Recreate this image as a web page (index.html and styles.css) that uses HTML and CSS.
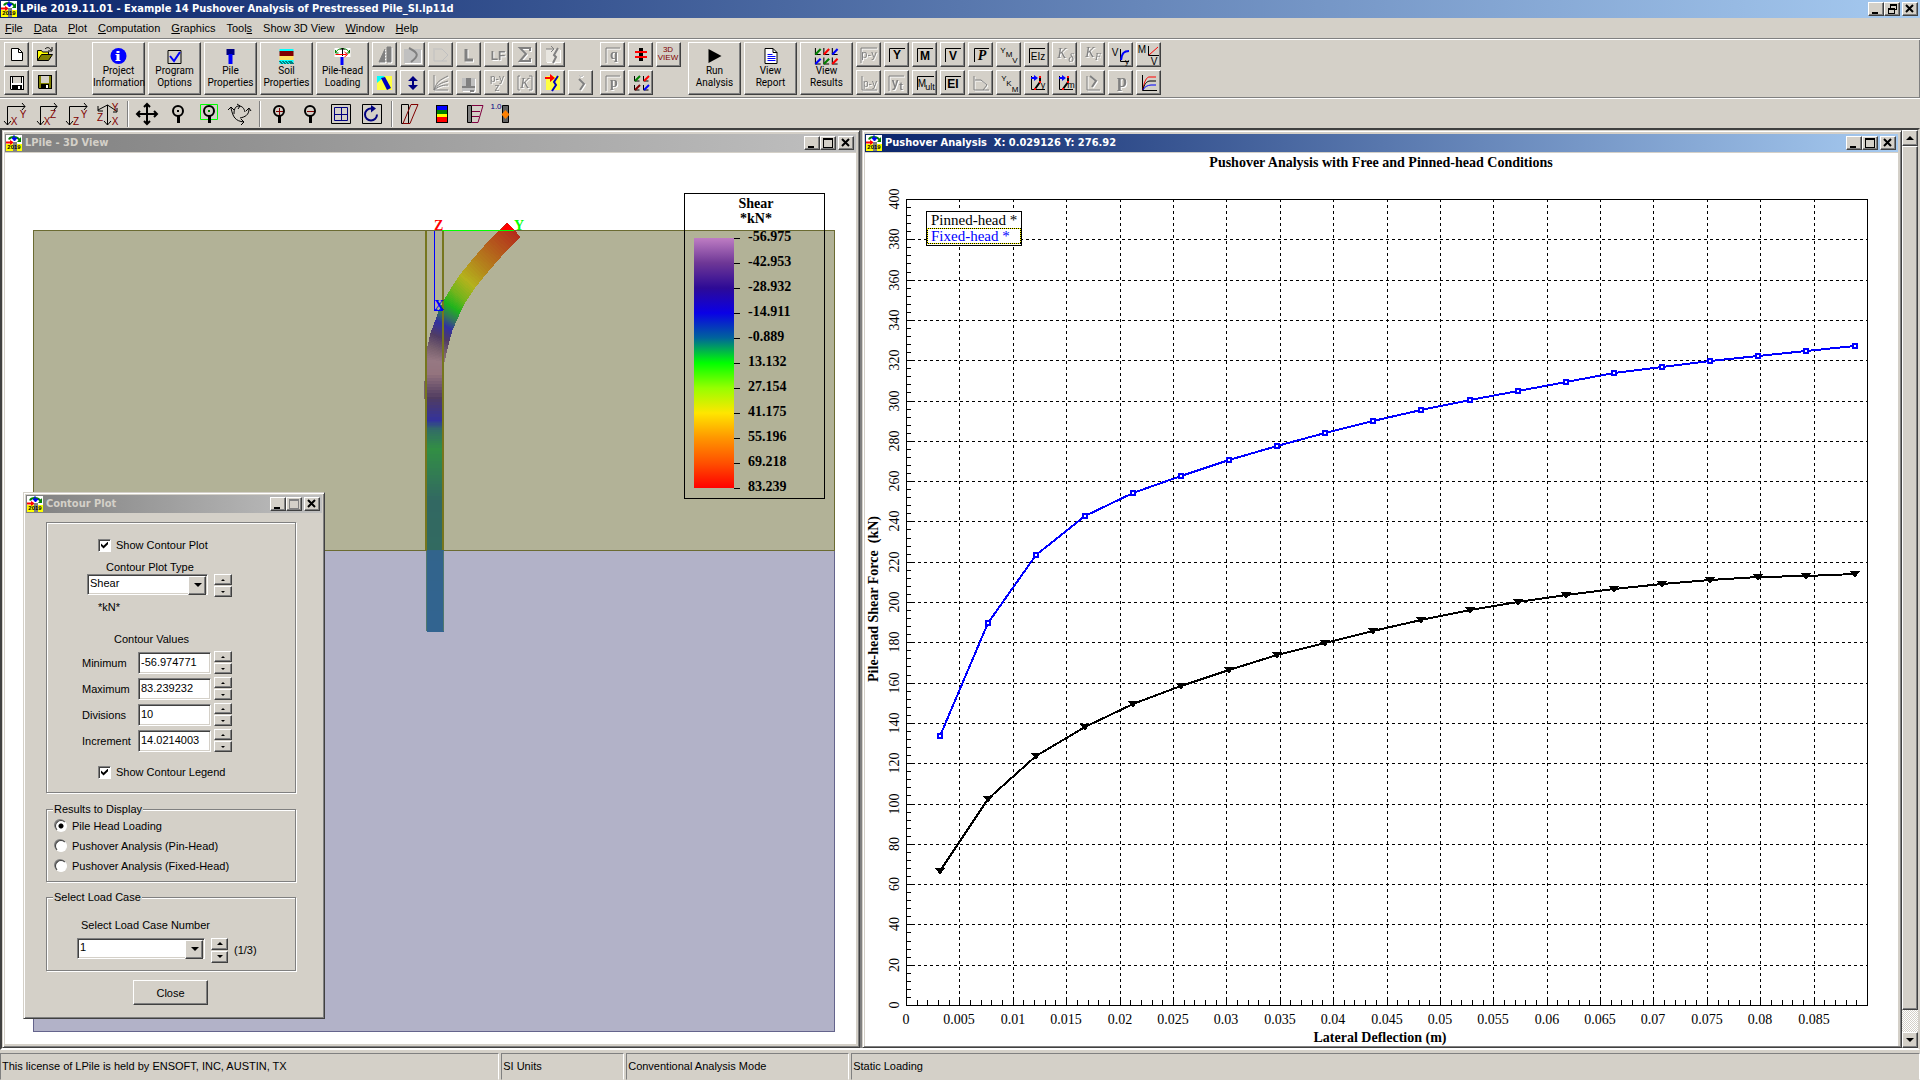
FILE: index.html
```html
<!DOCTYPE html>
<html lang="en">
<head>
    <meta charset="UTF-8">
    <meta name="viewport" content="width=device-width, initial-scale=1.0">
    <title>LPile 2019.11.01</title>
    <link rel="stylesheet" href="styles.css">
</head>
<body>
    <svg class="defs" width="0" height="0" aria-hidden="true">
        <symbol id="logo" viewBox="0 0 16 16" overflow="visible">
            <rect width="16" height="10" fill="#fff"/>
            <rect y="9" width="16" height="7" fill="#ffff00"/>
            <path d="M3 4.500c1-3 8-4 11 1" fill="none" stroke="#008000" stroke-width="2"/>
            <path d="M15 2v5h-4z" fill="#008000"/>
            <path d="M8 0v4M6 3h5l-2.500 3z" stroke="#0000ff" fill="#0000ff"/>
            <path d="M0 7.500h6" stroke="#ff0000" stroke-width="2"/>
            <path d="M4 5l4 2.500-4 2.500z" fill="#ff0000"/>
            <rect x="7" y="7" width="4" height="9" fill="#808080"/>
            <text x="8" y="14" class="logo-year">2019</text>
        </symbol>
        <symbol id="multi" viewBox="0 0 23 17">
            <path d="M1 1v6h5M9 1v6h5M17 1v6h5M1 10v6h5M9 10v6h5M17 10v6h5" fill="none" stroke="#000"/>
            <path d="M1 7l5-5M9 16l5-5" stroke="#008000" stroke-width="2"/>
            <path d="M9 7l5-5M17 16l5-5" stroke="#ff0000" stroke-width="2"/>
            <path d="M17 7l5-5M1 16l5-5" stroke="#0000ff" stroke-width="2"/>
        </symbol>
    </svg>

    <header class="titlebar active">
        <svg class="logo"><use href="#logo"/></svg>
        <h1>LPile 2019.11.01 - Example 14 Pushover Analysis of Prestressed Pile_SI.lp11d</h1>
        <div class="controls">
            <button aria-label="Minimize"><svg viewBox="0 0 14 12"><path d="M3 9h6v2H3z"/></svg></button>
            <button aria-label="Restore"><svg viewBox="0 0 14 12"><path d="M5 1h7v6h-2v4H3V5h2zM6 3v2h4v1h1V3zM4 7v3h5V7z" fill-rule="evenodd"/></svg></button>
            <button aria-label="Close"><svg viewBox="0 0 14 12"><path d="M3 2l7 7M10 2l-7 7" class="cross"/></svg></button>
        </div>
    </header>

    <nav class="menu">
        <a href="#"><u>F</u>ile</a>
        <a href="#"><u>D</u>ata</a>
        <a href="#"><u>P</u>lot</a>
        <a href="#"><u>C</u>omputation</a>
        <a href="#"><u>G</u>raphics</a>
        <a href="#">Tool<u>s</u></a>
        <a href="#">Show 3D View</a>
        <a href="#"><u>W</u>indow</a>
        <a href="#"><u>H</u>elp</a>
    </nav>

    <div class="toolbar">
        <div class="grid cols-2 files">
            <button aria-label="New"><svg viewBox="0 0 23 23"><path d="M6.500 5.500h7l4 4v8h-11z" fill="#fff" stroke="#000"/><path d="M13.500 5.500v4h4" fill="none" stroke="#000"/></svg></button>
            <button aria-label="Open"><svg viewBox="0 0 23 23"><path d="M4.500 17.500v-10h4l1 1.500h6v3" fill="#ffff00" stroke="#000"/><path d="M4.500 17.500l4-6h11l-4 6z" fill="#808000" stroke="#000"/><path d="M12 6c2-2 4-2 6 1M19 4v4h-4" fill="none" stroke="#000"/></svg></button>
            <button aria-label="Save as"><svg viewBox="0 0 23 23"><path d="M5 5h14v14H6l-1-1z"/><path d="M6 6h1v12H6zM17 6h1v12h-1zM6 12h12v2H6z" fill="#fff"/><path d="M8 6h8v6H8z" fill="#d4d0c8"/><path d="M13 15h2v3h-2z" fill="#fff"/></svg></button>
            <button aria-label="Save"><svg viewBox="0 0 23 23"><path d="M5 4h14v14H6l-1-1z"/><path d="M6 5h12v12H6z" fill="#808000"/><path d="M8 5h8v7H8z" fill="#d4d0c8"/><path d="M8 13h8v5H8z"/><path d="M13 14h2v3h-2z" fill="#fff"/></svg></button>
        </div>

        <div class="group">
            <button class="big"><svg viewBox="0 0 32 18"><circle cx="16" cy="9" r="8" fill="#0000ff"/><path d="M14 4h3v2h-3zM13 7h4v6h1v1h-5v-1h1V8h-1z" fill="#fff"/></svg>Project<br>Information</button>
            <button class="big"><svg viewBox="0 0 32 18"><path d="M9.500 3.500h13v13h-13z" fill="none" stroke="#000"/><path d="M11.500 9l4 5 6-9" fill="none" stroke="#0000ff" stroke-width="2"/></svg>Program<br>Options</button>
            <button class="big"><svg viewBox="0 0 32 18"><path d="M12 2h8v6h-8z" fill="#000080"/><path d="M14 7h4v10h-4z" fill="#0000ff"/></svg>Pile<br>Properties</button>
            <button class="big"><svg viewBox="0 0 32 18"><path d="M9 2h14v3H9z" fill="#00ffff"/><path d="M9 4h14v5H9z" fill="#800000"/><path d="M9 9h14v4H9z" fill="#ffe060"/><path d="M9 13h14v4H9z" fill="#00ffff"/><path d="M9 14l3 3M12 14l3 3M15 14l3 3M18 14l3 3M20 14l3 3" stroke="#000"/></svg>Soil<br>Properties</button>
            <button class="big"><svg viewBox="0 0 32 18"><path d="M8 1h16v9H8z" fill="#fff"/><path d="M9 6c2-6 12-6 14 0M9 3v3h3M20 6h3V3" fill="none" stroke="#008000"/><path d="M16 1v8M14 3l2-2 2 2" fill="none" stroke="#000"/><path d="M9 7.500h11M18 5l3 2.500-3 2.500" fill="none" stroke="#ff0000"/><path d="M14 10h3v8h-3z" fill="#0000ff"/></svg>Pile-head<br>Loading</button>
        </div>

        <div class="grid cols-8">
            <button class="off" disabled><svg viewBox="0 0 23 23"><path d="M14 4h4v15h-4zM12 6L6 19h6M11 9h2M10 12h3M9 15h4M7 18h6" fill="#808080" stroke="#808080"/></svg></button>
            <button class="off" disabled><svg viewBox="0 0 23 23"><path d="M3 6h17v14H3z" fill="#c0c0c0"/><path d="M8 5c10 5 10 8 2 14" class="gray-line"/></svg></button>
            <button class="faint" disabled><svg viewBox="0 0 23 23"><path d="M5 5v13h13M6 6h7l6 6-6 6" fill="none"/></svg></button>
            <button class="off" disabled><svg viewBox="0 0 23 23"><path d="M9 6v11h7" class="gray-line thick"/></svg></button>
            <button class="off" disabled><svg viewBox="0 0 23 23"><text x="13" y="17" class="t12 b">LF</text></svg></button>
            <button class="off" disabled><svg viewBox="0 0 23 23"><path d="M17 8V5H7l6 6-6 7h10v-3" class="gray-line"/></svg></button>
            <button class="off" disabled><svg viewBox="0 0 23 23"><path d="M5 6h14v13H5z" fill="#e8e6e0"/><path d="M5 6h7M10 3l3 3-3 3" class="gray-line thin"/><path d="M17 5l-4 7 2 2-3 6" class="gray-line"/></svg></button>

            <button class="new-row"><svg viewBox="0 0 23 23"><path d="M4 5h15v14H4z" fill="#ffff40"/><path d="M4 5h8l-8 7z" fill="#00ffff"/><path d="M8 7l4-1 6 11-4 2z" fill="#0000c0"/></svg></button>
            <button><svg viewBox="0 0 23 23"><path d="M12 5l5 5h-4v4h4l-5 5-5-5h4v-4H7z" fill="#000080"/></svg></button>
            <button class="off" disabled><svg viewBox="0 0 23 23"><path d="M5 4v15h14M5 19C8 10 11 9 19 5M5 19C9 13 12 12 19 10M5 19c4-3 7-5 14-5" class="gray-line thin"/></svg></button>
            <button class="off" disabled><svg viewBox="0 0 23 23"><path d="M5 7h13v13H5z" fill="#c0c0c0"/><path d="M9 7h5v10H9z" fill="#808080"/><path d="M5 16h13M13 20h4" class="gray-line"/></svg></button>
            <button class="off" disabled><svg viewBox="0 0 23 23"><text x="12" y="11" class="t10">p-y</text><text x="12" y="20" class="t10">z</text></svg></button>
            <button class="off" disabled><svg viewBox="0 0 23 23"><path d="M7 5H5v14h2M16 5h3v14h-3" class="gray-line thin"/><text x="12" y="17" class="serif t14 i">K</text></svg></button>
            <button><svg viewBox="0 0 23 23"><path d="M5 5h14v14H5z" fill="#ffff40"/><path d="M4 7h6" stroke="#ff0000" stroke-width="2"/><path d="M9 3l5 4-5 4z" fill="#ff0000"/><path d="M17 5l-4 6 2 3-4 6" fill="none" stroke="#0000c0" stroke-width="2"/></svg></button>
            <button class="off" disabled><svg viewBox="0 0 23 23"><path d="M10 4l2 2 2-2" fill="none" stroke="#c0c0c0"/><path d="M10 8l5 5-4 6" class="gray-line"/></svg></button>
        </div>

        <div class="grid cols-3">
            <button class="off" disabled><svg viewBox="0 0 23 23"><path d="M5 20V5h14" class="gray-line thin"/><text x="13" y="16" class="serif t14 b">q</text></svg></button>
            <button><svg viewBox="0 0 23 23"><path d="M10 5h4v13h-4z"/><path d="M6 9h12M6 14h12" stroke="#ff0000" stroke-width="2"/></svg></button>
            <button><svg viewBox="0 0 23 23"><text x="11" y="9" class="maroon t8">3D</text><text x="11" y="17" class="maroon t8">VIEW</text></svg></button>
            <button class="off new-row" disabled><svg viewBox="0 0 23 23"><path d="M5 20V5h14" class="gray-line thin"/><text x="13" y="16" class="serif t14 b">p</text></svg></button>
            <button><svg viewBox="0 0 23 23"><path d="M5.500 5v5h5M14.500 5v5h5M5.500 14v5h5M14.500 14v5h5" fill="none" stroke="#000"/><path d="M6 10l5-5" stroke="#008000" stroke-width="2"/><path d="M15 10l5-5" stroke="#ff0000" stroke-width="2"/><path d="M6 19l5-5" stroke="#800000" stroke-width="2"/><path d="M15 19l5-5" stroke="#0000ff" stroke-width="2"/></svg></button>
        </div>

        <div class="group">
            <button class="big"><svg viewBox="0 0 32 18"><path d="M10 2l13 7-13 7z"/></svg>Run<br>Analysis</button>
            <button class="big"><svg viewBox="0 0 32 18"><path d="M10.500 1.500h8l4 4v11h-12z" fill="#fff" stroke="#000"/><path d="M18.500 1.500v4h4" fill="none" stroke="#000"/><path d="M13 7.500h5M13 9.500h8M13 11.500h8M13 13.500h8" stroke="#0000ff"/></svg>View<br>Report</button>
            <button class="big"><svg viewBox="0 0 23 17"><use href="#multi"/></svg>View<br>Results</button>
        </div>

        <div class="grid cols-11 results">
            <button class="off" disabled><svg viewBox="0 0 23 23"><path d="M4 20V5h16" class="gray-line thin"/><text x="12" y="15" class="t11">p-y</text></svg></button>
            <button><svg viewBox="0 0 23 23"><path d="M4.500 19V5.500H20" class="axis"/><text x="12" y="16" class="t12 b">Y</text></svg></button>
            <button><svg viewBox="0 0 23 23"><path d="M4.500 19V5.500H20" class="axis"/><text x="12" y="17" class="t12 b">M</text></svg></button>
            <button><svg viewBox="0 0 23 23"><path d="M4.500 19V5.500H20" class="axis"/><text x="12" y="17" class="t12 b">V</text></svg></button>
            <button><svg viewBox="0 0 23 23"><path d="M5.500 19V5.500H20" class="axis"/><text x="13" y="17" class="serif t14 b i">P</text></svg></button>
            <button><svg viewBox="0 0 23 23"><text x="6" y="10" class="t8">Y</text><text x="12" y="14" class="t8">M</text><text x="18" y="20" class="t8">V</text></svg></button>
            <button><svg viewBox="0 0 23 23"><path d="M4.500 20V5.500H20" class="axis"/><text x="13" y="17" class="t10">EIz</text></svg></button>
            <button class="off" disabled><svg viewBox="0 0 23 23"><text x="9" y="15" class="serif t14 i">K</text><text x="18" y="19" class="serif t12 i">δ</text></svg></button>
            <button class="off" disabled><svg viewBox="0 0 23 23"><text x="9" y="14" class="serif t14 i">K</text><text x="17" y="17" class="serif t10 i">F</text></svg></button>
            <button><svg viewBox="0 0 23 23"><path d="M11.500 6v12.500H20" class="axis"/><path d="M12 17c1-7 3-9 8-9" fill="none" stroke="#0000ff" stroke-width="2"/><text x="6" y="13" class="t10">V</text><text x="18" y="21" class="t8">y</text></svg></button>
            <button><svg viewBox="0 0 23 23"><path d="M11.500 3v9.500H22" class="axis"/><path d="M12 12l9-8" stroke="#ff0000"/><text x="5" y="10" class="t10">M</text><text x="17" y="22" class="t10">V</text></svg></button>

            <button class="off new-row" disabled><svg viewBox="0 0 23 23"><path d="M5 5v14h15" class="gray-line thin"/><text x="13" y="16" class="t10">p-y</text></svg></button>
            <button class="off" disabled><svg viewBox="0 0 23 23"><path d="M4 20V5h15" class="gray-line thin"/><text x="10" y="16" class="t12 b">y</text><text x="16" y="19" class="t11 b">t</text></svg></button>
            <button><svg viewBox="0 0 23 23"><path d="M4.500 19V5.500H21" class="axis"/><text x="9" y="16" class="t10">M</text><text x="17" y="19" class="t9">ult</text></svg></button>
            <button><svg viewBox="0 0 23 23"><path d="M4.500 19V5.500H20" class="axis"/><text x="12" y="17" class="t12 b">EI</text></svg></button>
            <button class="off" disabled><svg viewBox="0 0 23 23"><path d="M5 5v14h15M6 9h6l6 5-4 5" class="gray-line thin"/></svg></button>
            <button><svg viewBox="0 0 23 23"><text x="7" y="10" class="t8">Y</text><text x="12" y="15" class="t8">K</text><text x="18" y="21" class="t8">M</text></svg></button>
            <button><svg viewBox="0 0 23 23"><path d="M6.500 5v13.500H20" class="axis"/><path d="M6 7h4" stroke="#0000ff" stroke-width="2"/><path d="M9 4l4 3-4 3z" fill="#0000ff"/><path d="M15 6v5l-5 7" fill="none" stroke="#000" stroke-width="2"/><path d="M14 5h2v2h-2zM14 10h2v2h-2zM9 17h2v2H9z" fill="#ff0000"/><text x="18" y="17" class="t9">y</text></svg></button>
            <button><svg viewBox="0 0 23 23"><path d="M6.500 5v13.500H20" class="axis"/><path d="M6 7h4" stroke="#0000ff" stroke-width="2"/><path d="M9 4l4 3-4 3z" fill="#0000ff"/><path d="M15 6v5l-5 7" fill="none" stroke="#000" stroke-width="2"/><path d="M14 5h2v2h-2zM14 10h2v2h-2zM9 17h2v2H9z" fill="#ff0000"/><text x="18" y="17" class="t9">m</text></svg></button>
            <button class="off" disabled><svg viewBox="0 0 23 23"><path d="M6 5v14h13" class="gray-line thin"/><path d="M9 5l6 5-4 6" class="gray-line"/></svg></button>
            <button class="off" disabled><svg viewBox="0 0 23 23"><text x="13" y="16" class="serif t18 b">p</text></svg></button>
            <button><svg viewBox="0 0 23 23"><path d="M5.500 4v15.500H20" class="axis"/><path d="M6 19c1-9 4-13 6-13h7" fill="none" stroke="#ff0000"/><path d="M6 19c1-6 4-9 7-9h6" fill="none" stroke="#000"/><path d="M6 19c1-3 5-5 8-5h5" fill="none" stroke="#0000ff"/></svg></button>
        </div>
    </div>

    <div class="viewbar">
        <button><svg viewBox="0 0 31 29"><path d="M7.500 26V7.500H25M22 4l3 3.500-3 3.500M4 22l3.500 4 3.500-4" class="axis"/><text x="23" y="19" class="maroon t10">Y</text><text x="14" y="26" class="maroon t10">X</text></svg></button>
        <button><svg viewBox="0 0 31 29"><path d="M9.500 26V7.500H26M23 4l3 3.500-3 3.500M6 22l3.500 4 3.500-4" class="axis"/><text x="22" y="19" class="maroon t10">Z</text><text x="16" y="26" class="maroon t10">X</text></svg></button>
        <button><svg viewBox="0 0 31 29"><path d="M7.500 26V7.500H25M22 4l3 3.500-3 3.500M4 22l3.500 4 3.500-4" class="axis"/><text x="22" y="19" class="maroon t10">Y</text><text x="14" y="26" class="maroon t10">Z</text></svg></button>
        <button><svg viewBox="0 0 31 29"><path d="M14.500 26V6M11 22l3.500 4 3.500-4M14.500 6L5 11M5 7v5h5M14.500 6l9 6M20 13h4V9" class="axis"/><text x="22" y="12" class="maroon t10">Y</text><text x="7" y="22" class="maroon t10">Z</text><text x="22" y="26" class="maroon t10">X</text></svg></button>
        <hr>
        <button><svg viewBox="0 0 31 29"><path d="M15 5v20M5 15h20M12 8l3-3 3 3M12 22l3 3 3-3M8 12l-3 3 3 3M22 12l3 3-3 3" class="axis wide"/></svg></button>
        <button><svg viewBox="0 0 31 29"><circle cx="15" cy="12" r="5" class="ring"/><path d="M14 17h3v7h-3z"/><path d="M14 11h2v2h-2z"/></svg></button>
        <button><svg viewBox="0 0 31 29"><path d="M6.500 5.500h17v15h-17z" fill="none" stroke="#00ff00"/><circle cx="15" cy="12" r="5" class="ring"/><path d="M14 17h3v7h-3z"/><path d="M14 11h2v2h-2z" fill="#008000"/></svg></button>
        <button><svg viewBox="0 0 31 29"><path d="M6 9c2 9 4 13 13 14M9 15c0-6 2-8 5-8s5 2 6 6M24 10c0 6-4 8-9 9M3 11l3-3 3 3M16 20l3 3-3 3M21 12l3-3 2 3M12 5l3 2-2 3" class="axis"/></svg></button>
        <hr>
        <button><svg viewBox="0 0 31 29"><circle cx="15" cy="12" r="5" class="ring"/><path d="M14 17h3v7h-3z"/><path d="M12 12.500h7M15.500 9v7" stroke="#800000"/></svg></button>
        <button><svg viewBox="0 0 31 29"><circle cx="15" cy="12" r="5" class="ring"/><path d="M14 17h3v7h-3z"/><path d="M12 12.500h7" stroke="#800000"/></svg></button>
        <button><svg viewBox="0 0 31 29"><path d="M5.500 5.500h19v19h-19z" fill="none" stroke="#000"/><path d="M8.500 8.500h13v13h-13zM15.500 8v14M8 15.500h14" fill="none" stroke="#000080"/></svg></button>
        <button><svg viewBox="0 0 31 29"><path d="M5.500 5.500h19v19h-19z" fill="none" stroke="#000"/><path d="M14 9.500a6 6 0 1 0 6 6" fill="none" stroke="#000080" stroke-width="2"/><path d="M14 6l5 3.500-5 4z" fill="#000080"/></svg></button>
        <hr>
        <button><svg viewBox="0 0 31 29"><path d="M5.500 5.500h7v19h-7z" fill="none" stroke="#000"/><path d="M7 24.500l8-19h7l-8 19z" fill="none" stroke="#800000"/></svg></button>
        <button><svg viewBox="0 0 31 29"><path d="M9 6h12v18H9z"/><path d="M10 7h10v4H10z" fill="#0000ff"/><path d="M10 11h10v4H10z" fill="#008000"/><path d="M10 15h10v3H10z" fill="#ffff00"/><path d="M10 18h10v5H10z" fill="#ff0000"/></svg></button>
        <button><svg viewBox="0 0 31 29"><path d="M9.500 6.500h4v17h-4z" fill="#808080" stroke="#000"/><path d="M14 6.500h11l-5 17h-6M14 12.500h8M14 17.500h7" fill="none" stroke="#800040"/></svg></button>
        <button><svg viewBox="0 0 31 29"><path d="M13.500 6.500h6v17h-6z" fill="#606060" stroke="#000"/><path d="M16.500 11l4 4.500-4 4.500-4-4.500z" fill="#ff8000"/><text x="7" y="10" class="navy t8">1.0</text></svg></button>
    </div>

    <main class="mdi">
        <section class="window view3d">
            <div class="titlebar">
                <svg class="logo"><use href="#logo"/></svg>
                <h2>LPile - 3D View</h2>
                <div class="controls">
                    <button aria-label="Minimize"><svg viewBox="0 0 14 12"><path d="M3 9h6v2H3z"/></svg></button>
                    <button aria-label="Maximize"><svg viewBox="0 0 14 12"><path d="M2 1h10v10H2zM3 3v7h8V3z" fill-rule="evenodd"/></svg></button>
                    <button aria-label="Close"><svg viewBox="0 0 14 12"><path d="M3 2l7 7M10 2l-7 7" class="cross"/></svg></button>
                </div>
            </div>
            <div class="canvas">
                <svg id="scene" viewBox="5 153 851 891" preserveAspectRatio="xMinYMin meet">
                    <defs>
                        <linearGradient id="scale" x1="0" y1="0" x2="0" y2="1">
                            <stop offset="0" stop-color="#be7dc3"/>
                            <stop offset="0.1" stop-color="#6e3796"/>
                            <stop offset="0.2" stop-color="#2d0a96"/>
                            <stop offset="0.3" stop-color="#0a00e6"/>
                            <stop offset="0.4" stop-color="#00649b"/>
                            <stop offset="0.5" stop-color="#00ff00"/>
                            <stop offset="0.6" stop-color="#96ff00"/>
                            <stop offset="0.7" stop-color="#ffe600"/>
                            <stop offset="0.8" stop-color="#ff9600"/>
                            <stop offset="0.9" stop-color="#ff5000"/>
                            <stop offset="1" stop-color="#ff0000"/>
                        </linearGradient>
                    </defs>
                    <rect x="33.500" y="230.500" width="801" height="320" fill="#b2b297" stroke="#6b6b32"/>
                    <rect x="33.500" y="550.500" width="801" height="481" fill="#b2b2c8" stroke="#64648c"/>
                    <path d="M33 550.500h802" stroke="#6b6b32"/>
                    <g id="pile"></g>
                    <path d="M507 223l7 7h-14z" fill="#ff0000"/>
                    <path d="M424 381h2v18h-2z" fill="#78646e"/>
                    <path d="M426 231v319M443 231v319" stroke="#76761e" stroke-width="2"/>
                    <path d="M426 551v80M443 551v80" stroke="#50786e"/>
                    <path d="M442 230.500h72" stroke="#00ff00"/>
                    <path d="M434.500 231v79.500H443" fill="none" stroke="#0000ff"/>
                    <text x="434" y="230" class="mark" fill="#ff0000">Z</text>
                    <text x="514" y="230" class="mark" fill="#00ff00">Y</text>
                    <text x="434" y="310" class="mark" fill="#0000ff">X</text>

                    <rect x="684.500" y="193.500" width="140" height="305" fill="none" stroke="#000"/>
                    <rect x="694" y="238" width="40" height="250" fill="url(#scale)"/>
                    <text x="756" y="208" class="value mid">Shear</text>
                    <text x="756" y="223" class="value mid">*kN*</text>
                    <g id="values"></g>
                </svg>

                <form class="window dialog" onsubmit="return false">
                    <div class="titlebar">
                        <svg class="logo"><use href="#logo"/></svg>
                        <h2>Contour Plot</h2>
                        <div class="controls">
                            <button type="button" aria-label="Minimize"><svg viewBox="0 0 14 12"><path d="M3 9h6v2H3z"/></svg></button>
                            <button type="button" aria-label="Maximize" disabled><svg viewBox="0 0 14 12"><path d="M2 1h10v10H2zM3 3v7h8V3z" fill="#808080" fill-rule="evenodd"/></svg></button>
                            <button type="button" aria-label="Close"><svg viewBox="0 0 14 12"><path d="M3 2l7 7M10 2l-7 7" class="cross"/></svg></button>
                        </div>
                    </div>
                    <div class="dialog-body">
                        <div class="panel contour">
                            <label class="check"><input type="checkbox" checked>Show Contour Plot</label>
                            <label class="caption type" for="plotType">Contour Plot Type</label>
                            <div class="row plot-type">
                                <span class="combo"><select id="plotType"><option>Shear</option></select></span>
                                <span class="spin"><button type="button" aria-label="Up"></button><button type="button" aria-label="Down"></button></span>
                            </div>
                            <p class="unit">*kN*</p>
                            <p class="caption values">Contour Values</p>
                            <div class="fields">
                                <div class="row"><label for="min">Minimum</label><input id="min" type="text" value="-56.974771"><span class="spin"><button type="button" aria-label="Up"></button><button type="button" aria-label="Down"></button></span></div>
                                <div class="row"><label for="max">Maximum</label><input id="max" type="text" value="83.239232"><span class="spin"><button type="button" aria-label="Up"></button><button type="button" aria-label="Down"></button></span></div>
                                <div class="row"><label for="div">Divisions</label><input id="div" type="text" value="10"><span class="spin"><button type="button" aria-label="Up"></button><button type="button" aria-label="Down"></button></span></div>
                                <div class="row"><label for="inc">Increment</label><input id="inc" type="text" value="14.0214003"><span class="spin"><button type="button" aria-label="Up"></button><button type="button" aria-label="Down"></button></span></div>
                            </div>
                            <label class="check"><input type="checkbox" checked>Show Contour Legend</label>
                        </div>

                        <fieldset class="panel display">
                            <legend>Results to Display</legend>
                            <label><input type="radio" name="display" checked>Pile Head Loading</label>
                            <label><input type="radio" name="display">Pushover Analysis (Pin-Head)</label>
                            <label><input type="radio" name="display">Pushover Analysis (Fixed-Head)</label>
                        </fieldset>

                        <fieldset class="panel loadcase">
                            <legend>Select Load Case</legend>
                            <label class="caption" for="loadCase">Select Load Case Number</label>
                            <div class="row">
                                <span class="combo"><select id="loadCase"><option>1</option></select></span>
                                <span class="spin tall"><button type="button" aria-label="Up"></button><button type="button" aria-label="Down"></button></span>
                                <span>(1/3)</span>
                            </div>
                        </fieldset>

                        <button type="button" class="close">Close</button>
                    </div>
                </form>
            </div>
        </section>

        <section class="window plot">
            <div class="titlebar active">
                <svg class="logo"><use href="#logo"/></svg>
                <h2>Pushover Analysis&nbsp; X: 0.029126 Y: 276.92</h2>
                <div class="controls">
                    <button aria-label="Minimize"><svg viewBox="0 0 14 12"><path d="M3 9h6v2H3z"/></svg></button>
                    <button aria-label="Maximize"><svg viewBox="0 0 14 12"><path d="M2 1h10v10H2zM3 3v7h8V3z" fill-rule="evenodd"/></svg></button>
                    <button aria-label="Close"><svg viewBox="0 0 14 12"><path d="M3 2l7 7M10 2l-7 7" class="cross"/></svg></button>
                </div>
            </div>
            <div class="canvas">
                <svg id="chart" viewBox="865 153 1033 893" preserveAspectRatio="xMinYMin meet">
                    <text x="1381" y="167" class="heading">Pushover Analysis with Free and Pinned-head Conditions</text>
                    <text x="1380" y="1042" class="heading">Lateral Deflection (m)</text>
                    <text x="0" y="0" transform="translate(878 599) rotate(-90)" class="heading" xml:space="preserve">Pile-head Shear Force  (kN)</text>
                    <g id="plot"></g>
                    <rect x="926.500" y="211.500" width="95" height="34" fill="#fff" stroke="#000"/>
                    <rect x="927.500" y="228.500" width="93" height="15" fill="none" stroke="#ffff00"/>
                    <rect x="927.500" y="228.500" width="93" height="15" fill="none" stroke="#000" stroke-dasharray="1 1"/>
                    <text x="931" y="225" class="key">Pinned-head *</text>
                    <text x="931" y="241" class="key" fill="#0000ff">Fixed-head *</text>
                </svg>
            </div>
        </section>

        <div class="scrollbar">
            <button aria-label="Scroll up"></button>
            <div class="thumb"></div>
            <div class="track"></div>
            <button aria-label="Scroll down"></button>
        </div>
    </main>

    <footer class="status">
        <span class="license">This license of LPile is held by ENSOFT, INC, AUSTIN, TX</span>
        <span class="units">SI Units</span>
        <span class="mode">Conventional Analysis Mode</span>
        <span class="loading">Static Loading</span>
    </footer>

    <script src="script.js"></script>
</body>
</html>
```
FILE: styles.css
```css
* {
    margin: 0;
    padding: 0;
    box-sizing: border-box;
}

body {
    height: 100vh;
    display: flex;
    flex-direction: column;
    background: #d4d0c8;
    color: #000;
    font: 11px/14px "Liberation Sans", Arial, sans-serif;
    overflow: hidden;
}

button, input, select {
    font: inherit;
    color: inherit;
    border-radius: 0;
}

svg {
    display: block;
}

.defs {
    position: absolute;
}

/* title bars */
.titlebar {
    flex: none;
    height: 18px;
    display: flex;
    align-items: center;
    padding: 0 2px 0 1px;
    background: linear-gradient(to right, #808080, #c0c0c0);
    color: #d4d0c8;
}

.titlebar.active {
    background: linear-gradient(to right, #0a246a, #a6caf0);
    color: #fff;
}

.titlebar .logo {
    width: 16px;
    height: 16px;
    margin-right: 3px;
    overflow: visible;
}

.titlebar h1, .titlebar h2 {
    flex: 1;
    font: bold 11px/18px "DejaVu Sans Condensed", "DejaVu Sans", sans-serif;
    white-space: pre;
}

.logo-year {
    font: bold 6px "Liberation Sans", sans-serif;
    text-anchor: middle;
    fill: #000;
}

.controls {
    display: flex;
}

.controls button {
    width: 16px;
    height: 14px;
}

.controls button:last-child {
    margin-left: 2px;
}

.controls svg {
    width: 14px;
    height: 12px;
    shape-rendering: crispEdges;
}

.cross {
    stroke: #000;
    stroke-width: 2;
    shape-rendering: auto;
}

/* raised look shared by every button */
button, .thumb {
    background: #d4d0c8;
    border: 1px solid;
    border-color: #fff #404040 #404040 #fff;
    box-shadow: inset -1px -1px 0 #808080;
}

/* menu */
.menu {
    flex: none;
    height: 20px;
    display: flex;
    gap: 11px;
    padding: 0 5px;
    line-height: 20px;
}

.menu a {
    color: #000;
    text-decoration: none;
}

/* toolbars */
.toolbar {
    flex: none;
    display: flex;
    height: 61px;
    padding: 3px 4px 2px;
    border-top: 1px solid #808080;
    border-bottom: 1px solid #fff;
    box-shadow: inset 0 1px 0 #fff, inset 0 -1px 0 #808080, inset -1px 0 0 #808080;
}

.grid {
    display: grid;
    gap: 3px;
    grid-auto-rows: 25px;
    margin-right: 7px;
}

.cols-2 { grid-template-columns: repeat(2, 25px); }
.cols-3 { grid-template-columns: repeat(3, 25px); }
.cols-8 { grid-template-columns: repeat(8, 25px); }
.cols-11 { grid-template-columns: repeat(11, 25px); }

.grid.files {
    margin-right: 35px;
}

.grid .new-row {
    grid-column: 1;
}

.group {
    display: flex;
    gap: 3px;
    margin-right: 3px;
}

.grid svg {
    width: 23px;
    height: 23px;
}

.big {
    width: 53px;
    height: 53px;
    padding: 4px 0 5px;
    font: 10px/12px Roboto, sans-serif;
    white-space: nowrap;
    display: block;
    text-align: center;
}

.big svg {
    width: 100%;
    height: 18px;
}

.axis {
    fill: none;
    stroke: #000;
}

.wide {
    stroke-width: 2;
}

.ring {
    fill: none;
    stroke: #000;
    stroke-width: 2;
}

.gray-line {
    fill: none;
    stroke: #808080;
    stroke-width: 2;
}

.gray-line.thin {
    stroke-width: 1;
}

.gray-line.thick {
    stroke-width: 3;
}

.off svg {
    filter: drop-shadow(1px 1px 0 #fff);
    fill: #808080;
}

.faint svg {
    stroke: #c0c0c0;
}

.toolbar text, .viewbar text {
    text-anchor: middle;
    font-family: "Liberation Sans", sans-serif;
}

.toolbar text.serif {
    font-family: "Liberation Serif", serif;
}

.t8 { font-size: 8px; }
.t9 { font-size: 9px; }
.t10 { font-size: 10px; }
.t11 { font-size: 11px; }
.t12 { font-size: 12px; }
.t14 { font-size: 14px; }
.t18 { font-size: 18px; }
.b { font-weight: bold; }
.i { font-style: italic; }
.maroon { fill: #800000; }
.navy { fill: #000080; }

.viewbar {
    flex: none;
    display: flex;
    height: 29px;
}

.viewbar button {
    width: 31px;
    border: 0;
    box-shadow: none;
}

.viewbar svg {
    width: 31px;
    height: 29px;
}

.viewbar hr {
    width: 2px;
    margin: 2px 3px 1px;
    border: 0;
    border-left: 1px solid #808080;
    border-right: 1px solid #fff;
}

/* document area */
.mdi {
    flex: 1;
    min-height: 0;
    display: grid;
    grid-template-columns: minmax(0, 860fr) minmax(0, 1040fr) 16px;
    grid-template-rows: minmax(0, 1fr);
    background: #808080;
    border: 2px solid;
    border-color: #404040 #d4d0c8 #fff #404040;
}

.window {
    display: flex;
    flex-direction: column;
    min-width: 0;
    background: #d4d0c8;
    border: 1px solid;
    border-color: #d4d0c8 #404040 #404040 #d4d0c8;
    box-shadow: inset 1px 1px 0 #fff, inset -1px -1px 0 #808080;
    padding: 3px;
}

.view3d {
    padding-left: 2px;
    margin-right: 2px;
}

.plot {
    padding-left: 2px;
    padding-bottom: 1px;
}

.canvas {
    position: relative;
    flex: 1;
    min-height: 0;
    margin-top: 1px;
    background: #fff;
}

.canvas > svg {
    width: 100%;
    height: 100%;
    shape-rendering: crispEdges;
}

.mark {
    font: bold 14px "Liberation Serif", serif;
}

.value, .heading {
    font: bold 14px "Liberation Serif", serif;
}

.mid, .heading, .tick {
    text-anchor: middle;
}

.tick {
    font: 14px "Liberation Serif", serif;
}

.key {
    font: 15px "Liberation Serif", serif;
}

/* contour dialog floats over the scene */
.dialog {
    position: absolute;
    left: 18px;
    top: 339px;
    width: 302px;
    padding: 2px;
}

.dialog-body {
    padding: 9px 28px 11px 20px;
    display: flex;
    flex-direction: column;
}

.panel {
    border: 1px solid #808080;
    box-shadow: 1px 1px 0 #fff, inset 1px 1px 0 #fff;
    width: 250px;
}

.row {
    display: flex;
    align-items: center;
}

.contour {
    padding: 15px 0 13px 35px;
}

.check {
    display: flex;
    align-items: center;
    gap: 5px;
    height: 14px;
    margin-left: 16px;
}

input[type="checkbox"] {
    appearance: none;
    width: 13px;
    height: 13px;
    background: #fff;
    border: 1px solid;
    border-color: #808080 #fff #fff #808080;
    box-shadow: inset 1px 1px 0 #404040;
}

input[type="checkbox"]:checked::before {
    content: "";
    display: block;
    width: 7px;
    height: 7px;
    margin: 2px;
    background: #000;
    clip-path: polygon(0 28%, 36% 60%, 100% 0, 100% 38%, 36% 100%, 0 66%);
}

.caption {
    display: block;
    height: 14px;
}

.type {
    margin: 8px 0 0 24px;
}

.plot-type {
    margin-left: 5px;
    height: 23px;
    gap: 6px;
    align-items: flex-start;
}

.unit {
    margin: 3px 0 18px 16px;
}

.values {
    margin: 0 0 5px 32px;
}

.fields {
    display: grid;
    gap: 3px;
    margin-bottom: 13px;
}

.fields label {
    width: 56px;
}

.fields .spin {
    margin-left: 3px;
}

input[type="text"], select {
    background: #fff;
    border: 1px solid;
    border-color: #808080 #fff #fff #808080;
    box-shadow: inset 1px 1px 0 #404040, inset -1px -1px 0 #d4d0c8;
    outline: 0;
}

input[type="text"] {
    width: 73px;
    height: 22px;
    padding: 0 2px 2px;
}

.combo {
    position: relative;
    width: 121px;
}

.combo select {
    display: block;
    appearance: none;
    width: 100%;
    height: 21px;
    padding: 0 2px 3px;
}

.combo::after {
    content: "";
    position: absolute;
    top: 2px;
    right: 2px;
    width: 16px;
    height: 17px;
    background: #d4d0c8;
    border: 1px solid;
    border-color: #fff #404040 #404040 #fff;
    box-shadow: inset -1px -1px 0 #808080;
    pointer-events: none;
}

.combo::before {
    content: "";
    position: absolute;
    z-index: 1;
    top: 9px;
    right: 6px;
    border: 4px solid transparent;
    border-top-color: #000;
    border-bottom: 0;
    pointer-events: none;
}

.spin {
    display: grid;
    gap: 1px;
}

.spin button {
    width: 18px;
    height: 11px;
    display: grid;
    place-items: center;
}

.spin button::before {
    content: "";
    border: 2px solid transparent;
    border-top: 0;
    border-bottom-color: #000;
}

.spin button:last-child::before {
    border-top: 2px solid #000;
    border-bottom: 0;
}

.spin.tall button {
    width: 17px;
    height: 12px;
}

.spin.tall button::before {
    border-left-width: 3px;
    border-right-width: 3px;
    border-bottom-width: 3px;
}

.spin.tall button:last-child::before {
    border-top-width: 3px;
    border-bottom-width: 0;
}

fieldset {
    padding-left: 6px;
}

legend {
    padding: 0 1px;
    background: #d4d0c8;
}

.display {
    margin-top: 9px;
    padding-top: 3px;
    padding-bottom: 8px;
}

.display label {
    display: flex;
    align-items: center;
    gap: 5px;
    height: 14px;
    margin: 0 0 6px 2px;
}

.display label:last-child {
    margin-bottom: 0;
}

input[type="radio"] {
    appearance: none;
    width: 12px;
    height: 12px;
    border-radius: 50%;
    background: #fff;
    border: 1px solid;
    border-color: #404040 #fff #fff #404040;
    box-shadow: -1px -1px 0 #808080;
}

input[type="radio"]:checked {
    background: radial-gradient(circle at center, #000 2px, #fff 3px);
}

.loadcase {
    margin-top: 8px;
    padding-top: 14px;
    padding-bottom: 8px;
}

.loadcase .caption {
    margin: 0 0 6px 28px;
}

.loadcase .row {
    gap: 6px;
    height: 24px;
    margin-left: 24px;
}

.loadcase .combo {
    width: 128px;
    align-self: flex-start;
}

.close {
    width: 75px;
    height: 25px;
    margin: 9px 0 0 87px;
}

/* scroll bar */
.scrollbar {
    display: flex;
    flex-direction: column;
}

.scrollbar button {
    width: 16px;
    height: 16px;
    display: grid;
    place-items: center;
}

.scrollbar button::before {
    content: "";
    border: 4px solid transparent;
    border-top: 0;
    border-bottom-color: #000;
}

.scrollbar button:last-child::before {
    border-top: 4px solid #000;
    border-bottom: 0;
}

.thumb {
    flex: 864 1 0;
}

.track {
    flex: 22 1 0;
    background: repeating-conic-gradient(#fff 0 25%, #d4d0c8 0 50%) 0 0 / 2px 2px;
}

/* status bar */
.status {
    flex: none;
    display: flex;
    gap: 2px;
    height: 30px;
    padding-top: 3px;
    line-height: 24px;
}

.status span {
    padding-left: 1px;
    border: 1px solid;
    border-color: #808080 #fff transparent #808080;
    white-space: nowrap;
    overflow: hidden;
}

.license { width: 26%; }
.units { width: 123px; }
.mode { width: 223px; }
.loading { flex: 1; }
```
FILE: script.js
```javascript
const NS = 'http://www.w3.org/2000/svg';

function add(parent, name, attrs, text) {
    const el = document.createElementNS(NS, name);
    for (const key in attrs) el.setAttribute(key, attrs[key]);
    if (text !== undefined) el.textContent = text;
    parent.appendChild(el);
    return el;
}

// Deflected pile: left edge, right edge and shear colour at each station
const stations = [
    [507, 223, 520, 237, [180, 46, 28]],
    [489, 241, 503, 254, [180, 90, 28]],
    [475, 257, 489, 270, [180, 130, 28]],
    [461, 274, 475, 287, [180, 178, 28]],
    [451, 289, 465, 302, [110, 180, 28]],
    [444, 301, 460, 312, [30, 180, 28]],
    [439, 311, 456, 321, [50, 120, 90]],
    [436, 320, 452, 330, [50, 50, 160]],
    [431, 333, 449, 341, [80, 60, 100]],
    [428, 346, 446, 353, [120, 96, 110]],
    [427, 360, 444, 362, [150, 120, 130]],
    [427, 372, 443, 372, [148, 116, 126]],
    [427, 397, 443, 397, [80, 60, 96]],
    [427, 420, 443, 420, [50, 50, 158]],
    [427, 430, 443, 430, [50, 110, 100]],
    [427, 448, 443, 448, [50, 142, 68]],
    [427, 475, 443, 475, [50, 122, 84]],
    [427, 500, 443, 500, [50, 104, 98]],
    [427, 550, 443, 550, [50, 106, 96]],
    [427, 551, 443, 551, [50, 100, 140]],
    [427, 631, 443, 631, [50, 100, 145]]
];

function drawPile() {
    const pile = document.getElementById('pile');
    const mix = (a, b, t) => a + (b - a) * t;
    for (let i = 0; i < stations.length - 1; i++) {
        const a = stations[i];
        const b = stations[i + 1];
        const n = 8;
        for (let k = 0; k < n; k++) {
            const p = [0, 1, 2, 3].map(j => mix(a[j], b[j], k / n));
            const q = [0, 1, 2, 3].map(j => mix(a[j], b[j], (k + 1) / n));
            const c = [0, 1, 2].map(j => Math.round(mix(a[4][j], b[4][j], k / n)));
            const color = `rgb(${c.join(',')})`;
            add(pile, 'polygon', {
                points: `${p[0]},${p[1]} ${p[2]},${p[3]} ${q[2]},${q[3]} ${q[0]},${q[1]}`,
                fill: color,
                stroke: color
            });
        }
    }
}

function drawScale() {
    const group = document.getElementById('values');
    const values = ['-56.975', '-42.953', '-28.932', '-14.911', '-0.889', '13.132',
        '27.154', '41.175', '55.196', '69.218', '83.239'];
    values.forEach((value, i) => {
        const y = 238 + i * 25;
        add(group, 'path', { d: `M734 ${y + 0.5}h6`, stroke: '#000' });
        add(group, 'text', { x: 748, y: y + 3, class: 'value' }, value);
    });
}

const fixedHead = [133.7, 189.8, 223.4, 242.9, 253.9, 262.6, 270.5, 277.4, 283.9, 290,
    295.4, 300.3, 304.9, 309.4, 313.4, 316.7, 319.7, 322.1, 324.6, 327];
const pinnedHead = [66.4, 102, 123.5, 137.9, 149.3, 158.4, 166.2, 173.6, 179.7, 185.4,
    190.9, 196, 200, 203.4, 206.4, 208.8, 210.7, 212.2, 213.1, 213.7];

const left = 906, right = 1867, top_ = 199, bottom = 1005;
const xAt = v => left + v / 0.09 * (right - left);
const yAt = v => bottom - v / 400 * (bottom - top_);
const snap = v => Math.round(v) + 0.5;

function drawChart() {
    const plot = document.getElementById('plot');

    for (let i = 0; i <= 90; i++) {
        const x = snap(xAt(i / 1000));
        const major = i % 5 === 0;
        add(plot, 'path', { d: `M${x} ${bottom}v${major ? -8 : -5}`, stroke: '#000' });
        if (major && i < 90) {
            if (i > 0) add(plot, 'path', { d: `M${x} ${top_}V${bottom}`, stroke: '#000', 'stroke-dasharray': '3 3' });
            add(plot, 'text', { x: x - 0.5, y: 1024, class: 'tick' }, String(i / 1000));
        }
    }

    for (let v = 0; v <= 400; v += 4) {
        const y = snap(yAt(v));
        const major = v % 20 === 0;
        add(plot, 'path', { d: `M${left} ${y}h${major ? 8 : 5}`, stroke: '#000' });
        if (major) {
            if (v > 0 && v < 400) add(plot, 'path', { d: `M${left} ${y}H${right}`, stroke: '#000', 'stroke-dasharray': '3 3' });
            add(plot, 'text', { transform: `translate(899 ${y - 0.5}) rotate(-90)`, class: 'tick' }, String(v));
        }
    }

    add(plot, 'rect', { x: left + 0.5, y: top_ + 0.5, width: right - left, height: bottom - top_, fill: 'none', stroke: '#000' });

    drawSeries(plot, pinnedHead, '#000', '#000', (x, y) => `M${x - 3} ${y - 2}h6l-3 4z`);
    drawSeries(plot, fixedHead, '#0000ff', '#fff', (x, y) => `M${x - 2} ${y - 2}h4v4h-4z`);
}

function drawSeries(plot, values, color, fill, marker) {
    const points = values.map((v, i) => [Math.round(xAt(0.0032 + i * 0.004507)), Math.round(yAt(v))]);
    add(plot, 'polyline', { points: points.join(' '), fill: 'none', stroke: color, 'stroke-width': 2 });
    points.forEach(p => add(plot, 'path', { d: marker(p[0], p[1]), fill: fill, stroke: color, 'stroke-width': 2 }));
}

drawPile();
drawScale();
drawChart();
```
